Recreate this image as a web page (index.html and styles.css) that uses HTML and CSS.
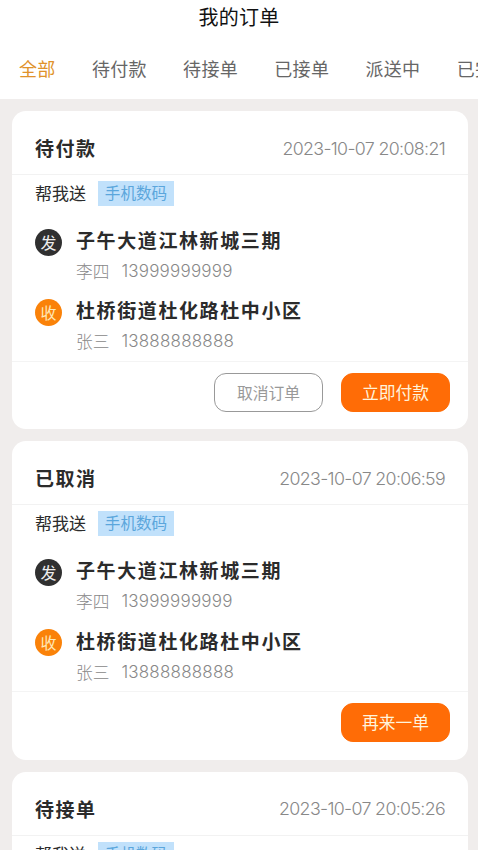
FILE: index.html
```html
<!DOCTYPE html>
<html lang="zh-CN">
<head>
<meta charset="utf-8">
<title>我的订单</title>
<link rel="stylesheet" href="styles.css">
</head>
<body>
<header class="top">
  <h1 class="title">我的订单</h1>
  <nav class="tabs">
    <span class="tab active">全部</span><span class="tab">待付款</span><span class="tab">待接单</span><span class="tab">已接单</span><span class="tab">派送中</span><span class="tab">已完成</span>
  </nav>
</header>
<main class="list">
  <section class="card">
    <div class="head"><h2 class="status">待付款</h2><time class="time">2023-10-07 20:08:21</time></div>
    <div class="kind"><span class="service">帮我送</span><span class="tag">手机数码</span></div>
    <div class="stop"><span class="dot">发</span><div><div class="place">子午大道江林新城三期</div><div class="who"><span>李四</span><span class="phone">13999999999</span></div></div></div>
    <div class="stop"><span class="dot orange">收</span><div><div class="place">杜桥街道杜化路杜中小区</div><div class="who"><span>张三</span><span class="phone">13888888888</span></div></div></div>
    <div class="actions"><button class="btn">取消订单</button><button class="btn primary">立即付款</button></div>
  </section>
  <section class="card">
    <div class="head"><h2 class="status">已取消</h2><time class="time">2023-10-07 20:06:59</time></div>
    <div class="kind"><span class="service">帮我送</span><span class="tag">手机数码</span></div>
    <div class="stop"><span class="dot">发</span><div><div class="place">子午大道江林新城三期</div><div class="who"><span>李四</span><span class="phone">13999999999</span></div></div></div>
    <div class="stop"><span class="dot orange">收</span><div><div class="place">杜桥街道杜化路杜中小区</div><div class="who"><span>张三</span><span class="phone">13888888888</span></div></div></div>
    <div class="actions"><button class="btn primary">再来一单</button></div>
  </section>
  <section class="card last">
    <div class="head"><h2 class="status">待接单</h2><time class="time">2023-10-07 20:05:26</time></div>
    <div class="kind"><span class="service">帮我送</span><span class="tag">手机数码</span></div>
  </section>
</main>
</body>
</html>
```
FILE: styles.css
```css
* { box-sizing: border-box; }
body {
  margin: 0;
  height: 850px;
  overflow: hidden;
  background: #f0edec;
  color: #2b2b2b;
  font-family: "Noto Sans CJK SC", sans-serif;
}
.top { height: 99px; background: #fff; overflow: hidden; }
.title {
  margin: 0;
  height: 36px;
  line-height: 33px;
  text-align: center;
  font-size: 20px;
  font-weight: 400;
  letter-spacing: 0.3px;
  color: #111;
}
.tabs {
  display: flex;
  gap: 36.3px;
  padding-left: 19px;
  height: 63px;
  line-height: 64px;
  font-size: 18px;
  letter-spacing: 0.3px;
  white-space: nowrap;
  color: #666;
}
.tab { flex: none; }
.active { color: #e0922a; }
.list {
  display: flex;
  flex-direction: column;
  gap: 12px;
  padding: 12px 10px 0 12px;
}
.card {
  height: 318.3px;
  flex: none;
  background: #fff;
  border-radius: 14px;
}
.card.last { height: 100px; }
.head {
  display: flex;
  align-items: center;
  justify-content: space-between;
  height: 64px;
  padding: 11px 23px 0;
  border-bottom: 1px solid #f2f2f2;
}
.status { margin: 0; line-height: 28px; font-size: 19px; letter-spacing: 1.5px; font-weight: 700; }
.time {
  font-family: Inter, sans-serif;
  font-size: 17.8px;
  font-weight: 300;
  letter-spacing: -0.65px;
  color: #888;
}
.kind {
  display: flex;
  align-items: flex-start;
  gap: 12px;
  height: 36px;
  padding: 6px 0 0 23px;
  font-size: 17px;
}
.service { line-height: 24px; }
.tag {
  width: 76px;
  height: 25px;
  line-height: 23px;
  text-align: center;
  background: #c1e1fb;
  color: #5ba6dc;
  font-size: 15.6px;
}
.stop {
  display: flex;
  gap: 14px;
  height: 70.3px;
  padding: 13px 0 0 23px;
}
.dot {
  width: 27px;
  height: 27px;
  margin-top: 4.5px;
  border-radius: 50%;
  background: #303030;
  color: #eee;
  font-size: 16px;
  line-height: 26px;
  text-align: center;
}
.orange { background: #fa8209; color: #ffe9b8; }
.place { height: 33px; line-height: 32px; font-size: 19px; font-weight: 700; letter-spacing: 1.6px; white-space: nowrap; }
.who {
  display: flex;
  gap: 12px;
  height: 24px;
  line-height: 28px;
  font-size: 16.7px;
  font-weight: 300;
  color: #888;
}
.phone { font-family: Inter, sans-serif; font-size: 17px; letter-spacing: 0.2px; }
.actions {
  display: flex;
  justify-content: flex-end;
  gap: 18px;
  margin-top: 9px;
  padding: 11px 18px 0;
  border-top: 1px solid #f4f4f4;
}
.btn {
  width: 109px;
  height: 39px;
  padding: 0;
  border: 1px solid #999;
  border-radius: 12px;
  background: #fff;
  color: #999;
  font: inherit;
  font-size: 15.8px;
  line-height: 35px;
}
.primary { border-color: #ff6c06; background: #ff6c06; color: #fff4dc; font-size: 16.8px; }
```
